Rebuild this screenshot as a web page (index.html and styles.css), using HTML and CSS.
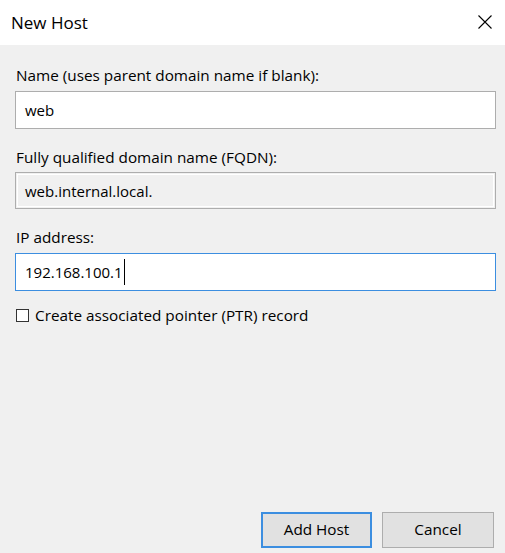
FILE: index.html
```html
<!DOCTYPE html>
<html>
<head>
<meta charset="utf-8">
<link rel="stylesheet" href="styles.css">
</head>
<body>
<div class="dialog">
  <div class="titlebar">
    <span class="title">New Host</span>
    <svg class="close" width="16" height="16" viewBox="0 0 16 16"><path d="M1.5 1.5 L14.5 14.5 M14.5 1.5 L1.5 14.5" stroke="#000" stroke-width="1.1" fill="none"/></svg>
  </div>
  <div class="content">
    <div class="label">Name (uses parent domain name if blank):</div>
    <div class="field">web</div>
    <div class="label gap">Fully qualified domain name (FQDN):</div>
    <div class="field readonly">web.internal.local.</div>
    <div class="label gap ip">IP address:</div>
    <div class="field focus">192.168.100.1<span class="caret"></span></div>
    <div class="check-row">
      <span class="checkbox"></span>
      <span class="check-label">Create associated pointer (PTR) record</span>
    </div>
    <div class="buttons">
      <button class="btn default">Add Host</button>
      <button class="btn">Cancel</button>
    </div>
  </div>
</div>
</body>
</html>
```
FILE: styles.css
```css
html, body {
  margin: 0;
  padding: 0;
}
body {
  width: 505px;
  height: 553px;
  overflow: hidden;
  font-family: "Open Sans", "Noto Sans", "Liberation Sans", sans-serif;
  font-size: 15.3px;
  color: #000;
}
.dialog {
  display: flex;
  flex-direction: column;
  width: 505px;
  height: 553px;
}
.titlebar {
  height: 45px;
  background: #fff;
  display: flex;
  align-items: center;
  justify-content: space-between;
  padding: 0 12px 0 11px;
  box-sizing: border-box;
  flex: none;
}
.title {
  font-size: 17px;
  margin-top: 0;
}
.close {
  margin-top: -1px;
}
.content {
  flex: 1;
  background: #f0f0f0;
  display: flex;
  flex-direction: column;
  padding: 20px 9px 5px 15px;
}
.label {
  line-height: 20px;
  height: 20px;
  padding-left: 1px;
  margin-bottom: 6px;
}
.label.gap {
  margin-top: 18px;
  margin-bottom: 5px;
}
.label.ip {
  margin-bottom: 6px;
}
.field {
  height: 38px;
  box-sizing: border-box;
  border: 1px solid #adadad;
  background: #fff;
  padding-left: 9px;
  display: flex;
  align-items: center;
  font-size: 15px;
}
.field.readonly {
  height: 37px;
  background: #f0f0f0;
  box-shadow: inset 0 0 0 1px #f0f0f0, inset 0 0 0 2px #fff;
}
.field.focus {
  border-color: #3c8ee0;
}
.caret {
  display: inline-block;
  width: 1px;
  height: 26px;
  background: #000;
  margin-left: 1px;
}
.check-row {
  display: flex;
  align-items: center;
  margin-top: 14px;
  height: 20px;
}
.checkbox {
  width: 13px;
  height: 13px;
  box-sizing: border-box;
  border: 1px solid #333;
  background: #fff;
  margin-left: 1px;
  margin-right: 6px;
}
.buttons {
  margin-top: auto;
  display: flex;
  justify-content: flex-end;
  gap: 10px;
  padding-right: 2px;
}
.btn {
  width: 112px;
  height: 36px;
  background: #e1e1e1;
  border: 1px solid #adadad;
  font-family: inherit;
  font-size: 15.3px;
  line-height: 20px;
  color: #000;
  padding: 0 0 2px 0;
  margin: 0;
}
.btn.default {
  border: 2px solid #3c8ee0;
  width: 111px;
}
```
